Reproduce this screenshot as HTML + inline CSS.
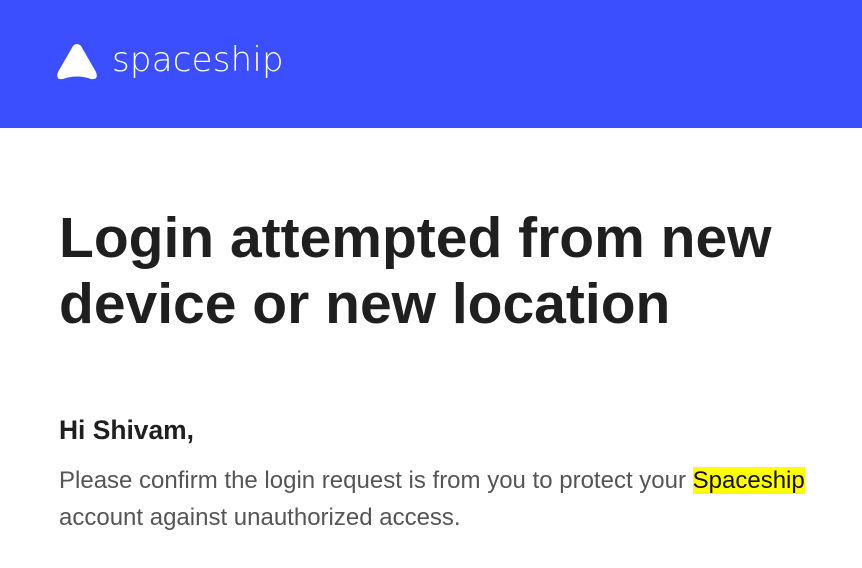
<!DOCTYPE html>
<html><head><style>
body{margin:0;width:862px;height:568px;overflow:hidden;background:#fff;font-family:"Liberation Sans",sans-serif}
.h{height:128px;background:#3b4fff;position:relative}
.logo{position:absolute;left:56px;top:43px}
.brand{position:absolute;left:112px;top:40px;color:#fff;font-size:34px;font-family:"DejaVu Sans","Liberation Sans",sans-serif;font-weight:200;letter-spacing:0.2px}
h1{position:absolute;left:59px;top:205px;margin:0;font-size:57px;line-height:66px;color:#1f1f1f;font-weight:bold;white-space:nowrap}
.hi{position:absolute;left:59px;top:415px;font-size:26.4px;font-weight:bold;color:#1f1f1f}
p{position:absolute;left:59px;top:462px;margin:0;font-size:24px;line-height:37px;color:#555;width:800px;white-space:nowrap}
mark{background:#ffff00;color:#111}
</style></head><body>
<div class="h">
<svg class="logo" width="42" height="38" viewBox="0 0 42 38"><path d="M17 3 Q21 -1 25 3 L40 29 Q43 37 35 36 Q21 31 7 36 Q-1 37 2 29 Z" fill="#fff"/></svg>
<div class="brand">spaceship</div>
</div>
<h1>Login attempted from new<br>device or new location</h1>
<div class="hi">Hi Shivam,</div>
<p>Please confirm the login request is from you to protect your <mark>Spaceship</mark><br>account against unauthorized access.</p>
</body></html>
